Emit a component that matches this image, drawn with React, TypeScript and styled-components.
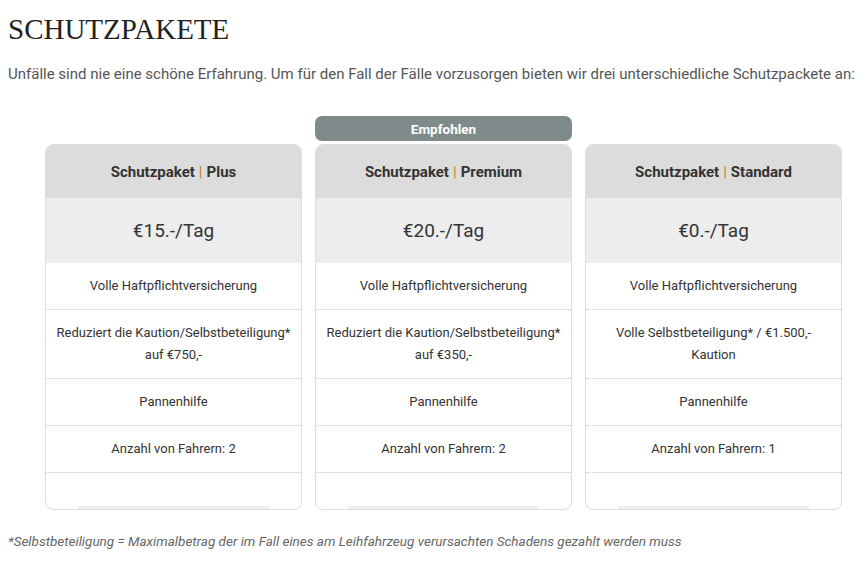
import styled, { createGlobalStyle } from "styled-components";

interface PackageType {
  name: string;
  price: string;
  features: string[][];
  recommended?: boolean;
}

const packages: PackageType[] = [
  {
    name: "Plus",
    price: "€15.-/Tag",
    features: [
      ["Volle Haftpflichtversicherung"],
      ["Reduziert die Kaution/Selbstbeteiligung*", "auf €750,-"],
      ["Pannenhilfe"],
      ["Anzahl von Fahrern: 2"],
    ],
  },
  {
    name: "Premium",
    price: "€20.-/Tag",
    recommended: true,
    features: [
      ["Volle Haftpflichtversicherung"],
      ["Reduziert die Kaution/Selbstbeteiligung*", "auf €350,-"],
      ["Pannenhilfe"],
      ["Anzahl von Fahrern: 2"],
    ],
  },
  {
    name: "Standard",
    price: "€0.-/Tag",
    features: [
      ["Volle Haftpflichtversicherung"],
      ["Volle Selbstbeteiligung* / €1.500,-", "Kaution"],
      ["Pannenhilfe"],
      ["Anzahl von Fahrern: 1"],
    ],
  },
];

const GlobalStyle = createGlobalStyle`
  body {
    margin: 8px;
    background: #fff;
    font-family: Roboto, "Liberation Sans", sans-serif;
  }
`;

const Title = styled.h1`
  margin: 0;
  padding-top: 4px;
  font-family: "Liberation Serif", serif;
  font-weight: 400;
  font-size: 29px;
  line-height: 34px;
  color: #222;
`;

const Intro = styled.p`
  margin: 18px 0 0;
  font-size: 15px;
  line-height: 20px;
  color: #555;
`;

const Cards = styled.div`
  display: flex;
  gap: 13px;
  padding-left: 37px;
  margin-top: 32px;
  align-items: flex-end;
`;

const Column = styled.div`
  width: 257px;
  display: flex;
  flex-direction: column;
  gap: 3px;
`;

const Badge = styled.div<{ $hidden?: boolean }>`
  height: 25px;
  border-radius: 7px;
  background: ${(p) => (p.$hidden ? "transparent" : "#7f8b8a")};
  color: #fff;
  font-weight: 700;
  font-size: 13.5px;
  display: flex;
  align-items: center;
  justify-content: center;
`;

const Card = styled.div`
  position: relative;
  border: 1px solid #ddd;
  border-radius: 8px;
  overflow: hidden;
  background: #fff;
  height: 364px;
  display: flex;
  flex-direction: column;
`;

const CardHead = styled.div`
  height: 53px;
  background: #dcdcdc;
  display: flex;
  align-items: center;
  justify-content: center;
  font-weight: 700;
  font-size: 15px;
  color: #333;

  span {
    color: #c4822a;
    font-weight: 400;
    margin: 0 4px;
  }
`;

const Price = styled.div`
  height: 65px;
  background: #ededed;
  display: flex;
  align-items: center;
  justify-content: center;
  font-size: 19px;
  color: #333;
`;

const Feature = styled.div<{ $tall?: boolean }>`
  height: ${(p) => (p.$tall ? "68px" : "46px")};
  border-bottom: 1px dotted #c8c8c8;
  display: flex;
  flex-direction: column;
  align-items: center;
  justify-content: center;
  text-align: center;
  font-size: 13px;
  line-height: 22px;
  color: #333;
  white-space: nowrap;
`;

const FootBar = styled.div`
  position: absolute;
  left: 32px;
  right: 32px;
  bottom: 0;
  height: 3px;
  background: #f0f0f0;
`;

const Note = styled.p`
  margin: 23px 0 0;
  font-size: 13.5px;
  font-style: italic;
  color: #666;
`;

export default function App() {
  return (
    <>
      <GlobalStyle />
      <Title>SCHUTZPAKETE</Title>
      <Intro>
        Unfälle sind nie eine schöne Erfahrung. Um für den Fall der Fälle vorzusorgen bieten wir drei unterschiedliche Schutzpackete an:
      </Intro>
      <Cards>
        {packages.map((pkg) => (
          <Column key={pkg.name}>
            <Badge $hidden={!pkg.recommended}>{pkg.recommended ? "Empfohlen" : ""}</Badge>
            <Card>
              <CardHead>
                Schutzpaket<span>|</span>{pkg.name}
              </CardHead>
              <Price>{pkg.price}</Price>
              {pkg.features.map((lines) => (
                <Feature key={lines.join(" ")} $tall={lines.length > 1}>
                  {lines.map((l) => (
                    <div key={l}>{l}</div>
                  ))}
                </Feature>
              ))}
              <FootBar />
            </Card>
          </Column>
        ))}
      </Cards>
      <Note>
        *Selbstbeteiligung = Maximalbetrag der im Fall eines am Leihfahrzeug verursachten Schadens gezahlt werden muss
      </Note>
    </>
  );
}
